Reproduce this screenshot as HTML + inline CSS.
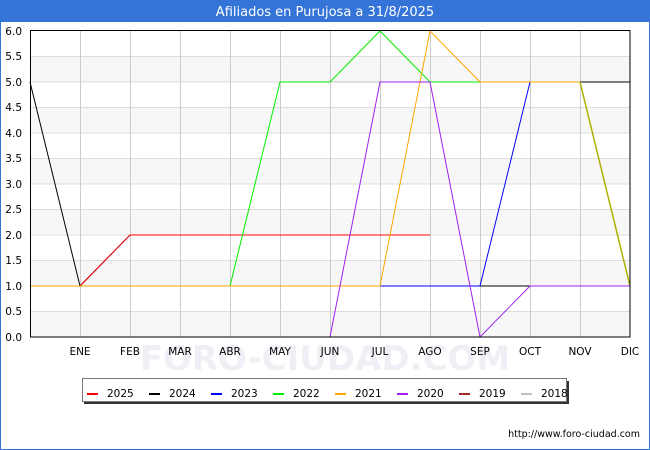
<!DOCTYPE html>
<html><head><meta charset="utf-8"><style>
html,body{margin:0;padding:0;background:#fff}
svg{display:block;font-family:"DejaVu Sans","Liberation Sans",sans-serif}
</style></head><body>
<svg width="650" height="450" viewBox="0 0 650 450" xmlns="http://www.w3.org/2000/svg">
<rect x="0" y="0" width="650" height="450" fill="#fff"/>
<rect x="0" y="0" width="650" height="22" fill="#3473d8"/>
<rect x="0" y="0" width="1" height="450" fill="#3473d8"/>
<rect x="649" y="0" width="1" height="450" fill="#3473d8"/>
<rect x="0" y="449" width="650" height="1" fill="#3473d8"/>
<text x="325" y="16" text-anchor="middle" fill="#fff" font-size="13">Afiliados en Purujosa a 31/8/2025</text>
<g fill="#f7f7f7">
<rect x="30" y="311.5" width="600" height="25.5"/>
<rect x="30" y="260.5" width="600" height="25.5"/>
<rect x="30" y="209.5" width="600" height="25.5"/>
<rect x="30" y="158.5" width="600" height="25.5"/>
<rect x="30" y="107.5" width="600" height="25.5"/>
<rect x="30" y="56.5" width="600" height="25.5"/>
</g>
<g stroke="#dddddd" stroke-width="1">
<line x1="30" x2="630" y1="311.5" y2="311.5"/><line x1="30" x2="630" y1="286" y2="286"/>
<line x1="30" x2="630" y1="260.5" y2="260.5"/><line x1="30" x2="630" y1="235" y2="235"/>
<line x1="30" x2="630" y1="209.5" y2="209.5"/><line x1="30" x2="630" y1="184" y2="184"/>
<line x1="30" x2="630" y1="158.5" y2="158.5"/><line x1="30" x2="630" y1="133" y2="133"/>
<line x1="30" x2="630" y1="107.5" y2="107.5"/><line x1="30" x2="630" y1="82" y2="82"/>
<line x1="30" x2="630" y1="56.5" y2="56.5"/>
</g>
<g stroke="#cccccc" stroke-width="1">
<line x1="80.5" x2="80.5" y1="31" y2="337"/><line x1="130.5" x2="130.5" y1="31" y2="337"/>
<line x1="180.5" x2="180.5" y1="31" y2="337"/><line x1="230.5" x2="230.5" y1="31" y2="337"/>
<line x1="280.5" x2="280.5" y1="31" y2="337"/><line x1="330.5" x2="330.5" y1="31" y2="337"/>
<line x1="380.5" x2="380.5" y1="31" y2="337"/><line x1="430.5" x2="430.5" y1="31" y2="337"/>
<line x1="480.5" x2="480.5" y1="31" y2="337"/><line x1="530.5" x2="530.5" y1="31" y2="337"/>
<line x1="580.5" x2="580.5" y1="31" y2="337"/>
</g>
<text x="325" y="370" text-anchor="middle" fill="#eef0f6" font-size="34" font-weight="bold">FORO-CIUDAD.COM</text>
<g fill="none" stroke-width="1">
<polyline stroke="#c0c0c0" points="330,82 380,82 480,82 580,82"/>
<polyline stroke="#000" points="30,82 80,286 130,235 430,235"/>
<polyline stroke="#000" points="480,286 530,286"/>
<polyline stroke="#000" points="580,82 630,82"/>
<polyline stroke="#ff0000" points="80,286 130,235 430,235"/>
<polyline stroke="#0000ff" points="380,286 480,286 530,82"/>
<polyline stroke="#00ee00" points="230,286 280,82 330,82 380,31 430,82 480,82"/>
<polyline stroke="#ffa500" points="30,286 380,286 430,31 480,82 580,82"/>
<polyline stroke="#b0b000" stroke-width="1.5" points="580,82 630,286"/>
<polyline stroke="#a020f0" points="330,337 380,82 430,82 480,337 530,286 630,286"/>
</g>
<rect x="30.5" y="30.5" width="599.5" height="306.5" fill="none" stroke="#000"/>
<g font-size="10.5" fill="#000" text-anchor="end">
<text x="22" y="341">0.0</text><text x="22" y="315">0.5</text><text x="22" y="290">1.0</text>
<text x="22" y="264">1.5</text><text x="22" y="239">2.0</text><text x="22" y="213">2.5</text>
<text x="22" y="188">3.0</text><text x="22" y="162">3.5</text><text x="22" y="137">4.0</text>
<text x="22" y="111">4.5</text><text x="22" y="86">5.0</text><text x="22" y="60">5.5</text>
<text x="22" y="35">6.0</text>
</g>
<g font-size="10.5" fill="#000" text-anchor="middle">
<text x="80" y="355">ENE</text><text x="130" y="355">FEB</text><text x="180" y="355">MAR</text>
<text x="230" y="355">ABR</text><text x="280" y="355">MAY</text><text x="330" y="355">JUN</text>
<text x="380" y="355">JUL</text><text x="430" y="355">AGO</text><text x="480" y="355">SEP</text>
<text x="530" y="355">OCT</text><text x="580" y="355">NOV</text><text x="630" y="355">DIC</text>
</g>
<rect x="84" y="381" width="485" height="23" fill="#333"/>
<rect x="82.5" y="378.5" width="484" height="23" fill="#fff" stroke="#777"/>
<g font-size="10.5" fill="#000">
<rect x="87" y="393" width="11" height="2" fill="#ff0000"/><text x="107" y="397">2025</text>
<rect x="149" y="393" width="11" height="2" fill="#000"/><text x="169" y="397">2024</text>
<rect x="211" y="393" width="11" height="2" fill="#0000ff"/><text x="231" y="397">2023</text>
<rect x="273" y="393" width="11" height="2" fill="#00ee00"/><text x="293" y="397">2022</text>
<rect x="335" y="393" width="11" height="2" fill="#ffa500"/><text x="355" y="397">2021</text>
<rect x="397" y="393" width="11" height="2" fill="#a020f0"/><text x="417" y="397">2020</text>
<rect x="459" y="393" width="11" height="2" fill="#a52a2a"/><text x="479" y="397">2019</text>
<rect x="521" y="393" width="11" height="2" fill="#c0c0c0"/><text x="541" y="397">2018</text>
</g>
<text x="640" y="437" text-anchor="end" font-size="9.5" fill="#000">http://www.foro-ciudad.com</text>
</svg>
</body></html>
